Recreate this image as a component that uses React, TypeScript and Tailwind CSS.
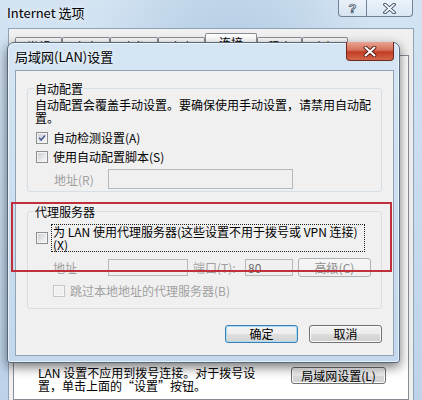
import React from "react";

function Checkbox({ checked = false, disabled = false }: { checked?: boolean; disabled?: boolean }) {
  return (
    <span
      className={`relative flex h-[12px] w-[12px] shrink-0 items-center justify-center border ${
        disabled ? "border-[#c6c6c6] bg-[#f7f7f7]" : "border-[#8e8f8f] bg-[#f4f4f4]"
      }`}
    >
      <span
        className={`h-[8px] w-[8px] ${
          disabled ? "bg-[#f0f0f0]" : "bg-[linear-gradient(135deg,#cdd1d6,#f7f7f7)]"
        }`}
      />
      {checked && (
        <svg className="absolute inset-0 h-full w-full" viewBox="0 0 12 12">
          <path d="M2.6 5.8 L4.9 8.4 L9.6 2.9" fill="none" stroke="#4a5e92" strokeWidth="1.9" />
        </svg>
      )}
    </span>
  );
}

function WinButton({
  children,
  primary = false,
  disabled = false,
  className = "",
}: {
  children: React.ReactNode;
  primary?: boolean;
  disabled?: boolean;
  className?: string;
}) {
  const look = disabled
    ? "border-[#adb2b5] bg-[linear-gradient(#f6f6f6,#efefef)] text-[#8d8d8d]"
    : primary
    ? "border-[#3c7fb1] bg-[linear-gradient(#f4f4f4,#ededed_50%,#e0e0e0_50%,#d4d4d4)] shadow-[inset_0_0_0_1px_#a9dbf6] text-black"
    : "border-[#707070] bg-[linear-gradient(#f2f2f2,#ebebeb_50%,#dddddd_50%,#cfcfcf)] shadow-[inset_0_0_0_1px_#fbfbfb] text-black";
  return (
    <button
      type="button"
      className={`flex shrink-0 items-center justify-center rounded-[3px] border text-[12px] leading-none ${look} ${className}`}
    >
      {children}
    </button>
  );
}

function DisabledInput({ value, className = "" }: { value?: string; className?: string }) {
  return (
    <div
      className={`flex shrink-0 items-center border border-[#b5b9bd] bg-[#f0f0f0] px-[2px] text-[12px] leading-none text-[#6d6d6d] ${className}`}
    >
      {value}
    </div>
  );
}

const tabs = [
  { label: "常规", w: "w-[47px]" },
  { label: "安全", w: "w-[48px]" },
  { label: "隐私", w: "w-[48px]" },
  { label: "内容", w: "w-[47px]" },
  { label: "连接", w: "w-[52px]", active: true },
  { label: "程序", w: "w-[45px]" },
  { label: "高级", w: "w-[46px]" },
];

export default function App() {
  return (
    <div
      lang="zh-CN"
      className="relative h-[400px] w-[422px] overflow-hidden bg-[radial-gradient(ellipse_at_55%_25%,#aac5df_0%,transparent_45%),linear-gradient(#d3e3f2,#bcd3ea)] font-['Noto_Sans_CJK_SC',sans-serif] text-black"
    >
      {/* Internet options title bar */}
      <div className="flex h-[28px] items-start justify-between">
        <span className="pl-[7px] pt-[4px] text-[13px] leading-[18px] [text-shadow:0_0_6px_#ffffff]">
          Internet 选项
        </span>
        <div className="mr-[9px] flex">
          <div className="flex h-[17px] w-[29px] items-center justify-center rounded-bl-[4px] border border-t-0 border-[#6f8296] bg-[linear-gradient(rgba(255,255,255,0.55),rgba(255,255,255,0.15))] font-['Liberation_Sans',sans-serif] text-[13px] font-bold leading-none text-[#f4f7fb] [-webkit-text-stroke:0.7px_#2e4157]">
            ?
          </div>
          <div className="flex h-[17px] w-[46px] items-center justify-center rounded-br-[4px] border border-l-0 border-t-0 border-[#6f8296] bg-[linear-gradient(rgba(255,255,255,0.55),rgba(255,255,255,0.15))]">
            <svg width="13" height="11" viewBox="0 0 13 11">
              <path d="M2 1.5 L11 9.5 M11 1.5 L2 9.5" stroke="#2e4157" strokeWidth="3.6" strokeLinecap="round" />
              <path d="M2 1.5 L11 9.5 M11 1.5 L2 9.5" stroke="#f4f7fb" strokeWidth="1.8" strokeLinecap="round" />
            </svg>
          </div>
        </div>
      </div>

      {/* Internet options client area */}
      <div className="mx-[8px] flex h-[372px] flex-col border border-b-0 border-[#8ea3b8] bg-[#f0f0f0] px-[4px] pt-[4px]">
        <div className="flex h-[22px] items-end pl-[2px]">
          {tabs.map((t) => (
            <div
              key={t.label}
              className={`${t.w} ${
                t.active ? "h-[22px] bg-white" : "h-[18px] bg-[linear-gradient(#fdfdfd,#e4e4e4)]"
              } rounded-t-[2px] border border-b-0 border-[#898c95] pt-[2px] text-center text-[12px] leading-[13px]`}
            >
              {t.label}
            </div>
          ))}
        </div>
        <div className="flex-1 border border-[#898c95] bg-white pl-[24px] pt-[310px]">
          <div className="flex items-start">
            <p className="w-[220px] whitespace-nowrap text-[12px] leading-[13px]">
              LAN 设置不应用到拨号连接。对于拨号设
              <br />
              置，单击上面的“设置”按钮。
            </p>
            <WinButton className="ml-[33px] mt-[1px] h-[17px] w-[95px]">局域网设置(L)</WinButton>
          </div>
        </div>
      </div>

      {/* LAN settings dialog */}
      <div className="absolute left-[7px] top-[42px] flex h-[321px] w-[393px] flex-col rounded-t-[7px] rounded-b-[3px] border border-[#56687c] bg-[linear-gradient(#d5e5f3,#c3d8ec)] pb-[6px] pl-[7px] pr-[5px] shadow-[inset_0_0_0_1px_rgba(255,255,255,0.6),0_4px_12px_rgba(0,0,0,0.55)]">
        <div className="flex h-[27px] items-start justify-between">
          <span className="pt-[6px] text-[13px] leading-[16px] [text-shadow:0_0_6px_#ffffff]">
            局域网(LAN)设置
          </span>
          <div className="-mt-[1px] flex h-[19px] w-[48px] items-center justify-center rounded-b-[4px] border border-t-0 border-[#6e2a20] bg-[linear-gradient(#eaa493,#d5705a_45%,#c13d24_55%,#d4664a)]">
            <svg width="14" height="11" viewBox="0 0 14 11">
              <path d="M2.5 1.5 L11.5 9.5 M11.5 1.5 L2.5 9.5" stroke="#5a1d14" strokeWidth="3.8" strokeLinecap="round" />
              <path d="M2.5 1.5 L11.5 9.5 M11.5 1.5 L2.5 9.5" stroke="#ffffff" strokeWidth="2" strokeLinecap="round" />
            </svg>
          </div>
        </div>

        <div className="flex flex-1 flex-col border border-[#92a3b5] bg-[#f0f0f0] px-[11px] pt-[11px] text-[12px] leading-[13px]">
          {/* Automatic configuration */}
          <fieldset className="rounded-[3px] border border-[#d5dfe5] px-[8px] pb-[2px]">
            <legend className="-ml-[2px] px-[1px] leading-[13px]">自动配置</legend>
            <p className="-ml-[1px] mt-[3px] whitespace-nowrap">
              自动配置会覆盖手动设置。要确保使用手动设置，请禁用自动配
              <br />
              置。
            </p>
            <div className="mt-[7px] flex h-[13px] items-center gap-[5px]">
              <Checkbox checked />
              <span>自动检测设置(A)</span>
            </div>
            <div className="mt-[6px] flex h-[13px] items-center gap-[5px]">
              <Checkbox />
              <span>使用自动配置脚本(S)</span>
            </div>
            <div className="mt-[6px] flex h-[20px] items-center">
              <span className="ml-[18px] w-[54px] text-[#a0a0a0]">地址(R)</span>
              <DisabledInput className="h-[20px] w-[185px]" />
            </div>
          </fieldset>

          {/* Proxy server */}
          <fieldset className="mt-[13px] rounded-[3px] border border-[#d5dfe5] px-[8px] pb-[11px]">
            <legend className="-ml-[2px] px-[1px] leading-[13px]">代理服务器</legend>
            <div className="mt-[6px] flex items-center">
              <Checkbox />
              <span className="ml-[3px] w-[314px] whitespace-nowrap border border-dotted border-[#222] px-[1px] leading-[13px]">
                为 LAN 使用代理服务器(这些设置不用于拨号或 VPN 连接)
                <br />
                (X)
              </span>
            </div>
            <div className="mt-[6px] flex h-[19px] items-center text-[#a0a0a0]">
              <span className="ml-[17px] w-[55px]">地址</span>
              <DisabledInput className="h-[17px] w-[80px]" />
              <span className="ml-[5px] w-[52px]">端口(T):</span>
              <DisabledInput value="80" className="h-[17px] w-[48px]" />
              <WinButton disabled className="ml-[5px] h-[19px] w-[73px]">
                高级(C)
              </WinButton>
            </div>
            <div className="mt-[7px] flex h-[13px] items-center gap-[5px] pl-[17px]">
              <Checkbox disabled />
              <span className="text-[#a0a0a0]">跳过本地地址的代理服务器(B)</span>
            </div>
          </fieldset>

          {/* Dialog buttons */}
          <div className="mt-[16px] flex justify-end gap-[11px]">
            <WinButton primary className="h-[18px] w-[73px]">
              确定
            </WinButton>
            <WinButton className="h-[18px] w-[73px]">取消</WinButton>
          </div>
        </div>
      </div>

      {/* Red annotation frame */}
      <div className="pointer-events-none absolute left-[11px] top-[202px] h-[70px] w-[381px] border-2 border-[#c0303a]" />
    </div>
  );
}
